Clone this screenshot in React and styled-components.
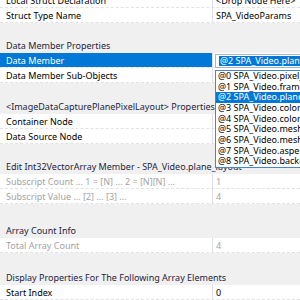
import React from 'react';
import styled, { createGlobalStyle } from 'styled-components';

const GlobalStyle = createGlobalStyle`
  html, body { margin: 0; padding: 0; background: #f0f0f0; }
  body { font-family: "Noto Sans", "Open Sans", sans-serif; }
`;

// Property grid
const Grid = styled.div`
  position: relative;
  width: 300px;
  height: 300px;
  overflow: hidden;
  background: #f0f0f0;
  font-size: 9px;
  color: #000;
`;

const Sheet = styled.div`
  display: flex;
  flex-direction: column;
  margin-top: -7px;
`;

const Group = styled.div`
  display: flex;
  flex-direction: column;
  padding-top: ${p => p.$space || 0}px;
`;

const Header = styled.div`
  height: 15px;
  display: flex;
  align-items: center;
  padding-left: 6px;
  white-space: nowrap;
  color: #1e1e3c;
`;

const Row = styled.div`
  display: grid;
  grid-template-columns: 212px 1px 1fr;
  height: 15px;
  background: #fff;
  border-bottom: 1px dashed #e2e2e2;
  box-sizing: border-box;
`;

const Label = styled.div`
  display: flex;
  align-items: center;
  padding-left: 6px;
  white-space: nowrap;
  overflow: hidden;
  background: ${p => (p.$selected ? '#0078d7' : 'transparent')};
  color: ${p => (p.$selected ? '#fff' : p.$disabled ? '#a3a3a3' : '#000')};
`;

const Divider = styled.div`
  background: #dedef0;
`;

const Value = styled.div`
  display: flex;
  align-items: center;
  padding-left: 3px;
  white-space: nowrap;
  overflow: hidden;
  color: ${p => (p.$disabled ? '#a3a3a3' : '#000')};
`;

// Dropdown editor
const Combo = styled.div`
  position: absolute;
  left: 215px;
  top: 54px;
  width: 100px;
  height: 14px;
  box-sizing: border-box;
  border: 1px solid #9fb6d3;
  background: #fff;
  display: flex;
  align-items: center;
  padding-left: 3px;
`;

const ComboText = styled.span`
  background: #0078d7;
  color: #fff;
  white-space: nowrap;
  line-height: 10px;
  padding: 0 1px;
`;

const List = styled.div`
  position: absolute;
  left: 215px;
  top: 70px;
  width: 100px;
  box-sizing: border-box;
  border: 1px solid #4a86c2;
  background: #fff;
  display: flex;
  flex-direction: column;
`;

const Item = styled.div`
  height: 10.67px;
  line-height: 10.67px;
  padding-left: 2px;
  white-space: nowrap;
  background: ${p => (p.$selected ? '#0078d7' : '#fff')};
  color: ${p => (p.$selected ? '#fff' : '#000')};
`;

const groups = [
  {
    space: 0,
    rows: [
      { label: 'Local Struct Declaration', value: '<Drop Node Here>' },
      { label: 'Struct Type Name', value: 'SPA_VideoParams' },
    ],
  },
  {
    space: 15,
    title: 'Data Member Properties',
    rows: [
      { label: 'Data Member', value: '', selected: true },
      { label: 'Data Member Sub-Objects', value: '' },
    ],
  },
  {
    space: 16,
    title: '<ImageDataCapturePlanePixelLayout> Properties',
    rows: [
      { label: 'Container Node', value: '' },
      { label: 'Data Source Node', value: '' },
    ],
  },
  {
    space: 15,
    title: 'Edit Int32VectorArray Member - SPA_Video.plane_layout',
    rows: [
      { label: 'Subscript Count ... 1 = [N] ... 2 = [N][N] ...', value: '1', disabled: true },
      { label: 'Subscript Value ... [2] ... [3] ...', value: '4', disabled: true },
    ],
  },
  {
    space: 19,
    title: 'Array Count Info',
    rows: [{ label: 'Total Array Count', value: '4', disabled: true }],
  },
  {
    space: 17,
    title: 'Display Properties For The Following Array Elements',
    rows: [{ label: 'Start Index', value: '0' }],
  },
];

const members = [
  '@0 SPA_Video.pixel_format',
  '@1 SPA_Video.frame_rate',
  '@2 SPA_Video.plane_layout',
  '@3 SPA_Video.color_range',
  '@4 SPA_Video.color_matrix',
  '@5 SPA_Video.mesh_width',
  '@6 SPA_Video.mesh_height',
  '@7 SPA_Video.aspect_ratio',
  '@8 SPA_Video.background',
];

export default function App() {
  return (
    <>
      <GlobalStyle />
      <Grid>
        <Sheet>
          {groups.map((g, i) => (
            <Group key={i} $space={g.space}>
              {g.title && <Header>{g.title}</Header>}
              {g.rows.map(r => (
                <Row key={r.label}>
                  <Label $selected={r.selected} $disabled={r.disabled}>{r.label}</Label>
                  <Divider />
                  <Value $disabled={r.disabled}>{r.value}</Value>
                </Row>
              ))}
            </Group>
          ))}
        </Sheet>
        <Combo>
          <ComboText>@2 SPA_Video.plane_layout</ComboText>
        </Combo>
        <List>
          {members.map((m, i) => (
            <Item key={m} $selected={i === 2}>{m}</Item>
          ))}
        </List>
      </Grid>
    </>
  );
}
